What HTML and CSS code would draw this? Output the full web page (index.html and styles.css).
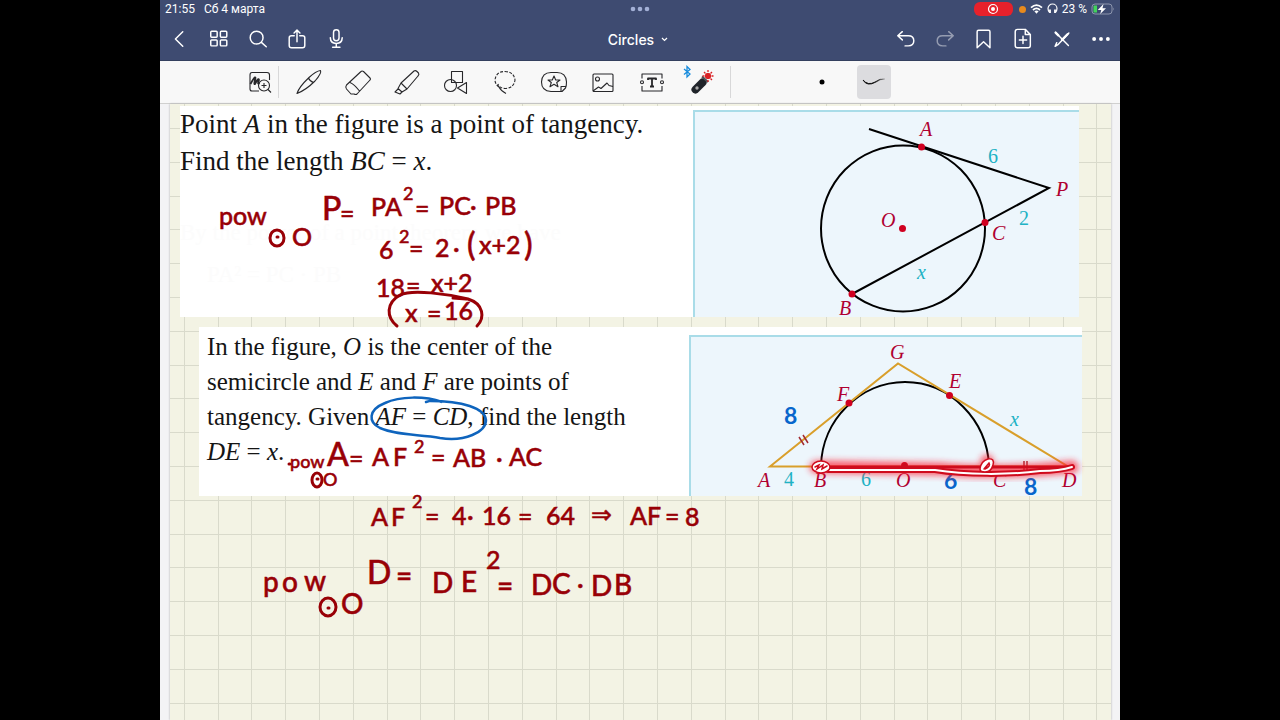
FILE: index.html
```html
<!DOCTYPE html>
<html lang="ru">
<head>
<meta charset="utf-8">
<title>Circles</title>
<link rel="stylesheet" href="styles.css">
</head>
<body>
<div class="app">
  <header class="header">
    <div class="status">
      <div class="status-side"><span>21:55</span><span>Сб 4 марта</span></div>
      <svg class="dots" width="20" height="6" viewBox="0 0 20 6"><circle cx="3" cy="3" r="2.300"/><circle cx="10" cy="3" r="2.300"/><circle cx="17" cy="3" r="2.300"/></svg>
      <div class="status-side status-end">
        <span class="record"><svg width="12" height="12" viewBox="0 0 12 12" fill="none" stroke="#fff"><circle cx="6" cy="6" r="4.500" stroke-width="1.200"/><circle cx="6" cy="6" r="2" fill="#fff" stroke="none"/></svg></span>
        <span class="mic-dot"></span>
        <svg width="13" height="12" viewBox="0 0 13 12" fill="none" stroke="#fff" stroke-width="1.800"><path d="M1 4.600Q6.500 -.4 12 4.600M3 7Q6.500 3.800 10 7"/><path d="M4.400 8.300Q6.500 6.600 8.600 8.300L6.500 10.800Z" fill="#fff" stroke="none"/></svg>
        <svg width="11" height="12" viewBox="0 0 11 12" fill="none" stroke="#fff" stroke-width="1.200"><path d="M2.500 9.500Q1 7.500 1 5.500A4.500 4.500 0 0 1 10 5.500Q10 7.500 8.500 9.500"/><path d="M3 6.500V10M8 6.500V10" stroke-width="1.800"/></svg>
        <span>23 %</span>
        <svg width="24" height="12" viewBox="0 0 24 12"><rect x="1" y="1" width="20" height="10" rx="3" fill="none" stroke="#8c95ad"/><path d="M3 2.500H6V9.500H3Q2.500 9.500 2.500 9V3Q2.500 2.500 3 2.500" fill="#42d35c"/><path d="M22.300 4.500Q24 6 22.300 7.500Z" fill="#8c95ad"/><path d="M12.500 1L6.800 6.900H10.300L9.200 11L15 5.200H11.500Z" fill="#fff"/></svg>
      </div>
    </div>
    <nav class="nav">
      <div class="nav-group">
        <button class="nav-btn" aria-label="Back"><svg class="icon" viewBox="0 0 24 24"><path d="M15 4L7 12L15 20"/></svg></button>
        <button class="nav-btn" aria-label="Thumbnails"><svg class="icon" viewBox="0 0 24 24"><rect x="3" y="3.500" width="7" height="6.500" rx="1"/><rect x="13.500" y="3.500" width="7" height="6.500" rx="1"/><rect x="3" y="13" width="7" height="6.500" rx="1"/><rect x="13.500" y="13" width="7" height="6.500" rx="1"/></svg></button>
        <button class="nav-btn" aria-label="Search"><svg class="icon" viewBox="0 0 24 24"><circle cx="10.500" cy="10.500" r="7"/><path d="M15.700 15.700L21 20.500"/></svg></button>
        <button class="nav-btn" aria-label="Share"><svg class="icon" viewBox="0 0 24 24"><path d="M9 8.500H6Q3.500 8.500 3.500 10.500V19Q3.500 21.500 6 21.500H18Q20.500 21.500 20.500 19V10.500Q20.500 8.500 18 8.500H15M12 15V2.500M8.800 5.500L12 2.300L15.200 5.500"/></svg></button>
        <button class="nav-btn" aria-label="Record"><svg class="icon" viewBox="0 0 24 24"><rect x="9.300" y="2" width="6" height="12" rx="3"/><path d="M5.800 10.500Q6 16.800 12.300 16.800Q18.600 16.800 18.800 10.500M12.300 16.800V21M8.300 21H16.300"/></svg></button>
      </div>
      <button class="title">Circles<svg width="7" height="5" viewBox="0 0 7 5" fill="none" stroke="#fff" stroke-width="1.200"><path d="M1 1L3.500 3.500L6 1"/></svg></button>
      <div class="nav-group nav-end">
        <button class="nav-btn" aria-label="Undo"><svg class="icon" viewBox="0 0 24 24"><path d="M8 4L3 8.500L8 13M3 8.500H14.500Q20.500 8.500 20.500 14Q20.500 19.500 14.500 19.500H11"/></svg></button>
        <button class="nav-btn" aria-label="Redo" disabled><svg class="icon" viewBox="0 0 24 24"><path d="M16 4L21 8.500L16 13M21 8.500H9.500Q3.500 8.500 3.500 14Q3.500 19.500 9.500 19.500H13"/></svg></button>
        <button class="nav-btn" aria-label="Bookmark"><svg class="icon" viewBox="0 0 24 24"><path d="M4.500 4Q4.500 2.500 6 2.500H17Q18.500 2.500 18.500 4V21.500L11.500 15L4.500 21.500Z"/></svg></button>
        <button class="nav-btn" aria-label="Add page"><svg class="icon" viewBox="0 0 24 24"><path d="M14.500 1.500H6Q3.500 1.500 3.500 4V19Q3.500 21.500 6 21.500H17.500Q20 21.500 20 19V7ZM14.500 1.500V7H20M12 9V17M8 13H16"/></svg></button>
        <button class="nav-btn" aria-label="Read only"><svg class="icon" viewBox="0 0 24 24"><path d="M5 5L19 19M4.500 20L8 17.800L19.500 5.500M4.500 20L6.300 16"/><path d="M5 5L8 8M12 13L18 6.800" stroke-width="2.500"/></svg></button>
        <button class="nav-btn" aria-label="More"><svg class="icon" viewBox="0 0 24 24"><g fill="#fff" stroke="none"><circle cx="4.500" cy="12" r="2.100"/><circle cx="12" cy="12" r="2.100"/><circle cx="19.500" cy="12" r="2.100"/></g></svg></button>
      </div>
    </nav>
  </header>

  <div class="toolbar" role="toolbar" aria-label="Tools">
    <button class="tool tool-zoom" aria-label="Zoom window"><svg class="glyph" viewBox="0 0 28 28"><path d="M13 23H6Q4 23 4 21V7Q4 4.500 6 4.500H21Q23.500 4.500 23.500 7V12"/><path d="M4.500 16Q9 7.500 9.500 10Q7.500 17 9 16Q12.500 9 13 12Q11 17 13.500 15" stroke-width="1.800"/><circle cx="18" cy="17.500" r="5.500"/><path d="M22 21.500L25 24.500M15.500 17.500H20.500M18 15V20"/></svg></button>
    <span class="rule"></span>
    <div class="tools">
      <button class="tool" aria-label="Pen"><svg class="glyph" viewBox="0 0 28 28"><path d="M2 25.500Q4 19 14 9.500Q21 3 25.500 2.500Q27 5 20 13Q11 22 2 25.500ZM13.500 10Q14.500 13 18.500 14.500"/></svg></button>
      <button class="tool" aria-label="Eraser"><svg class="glyph" viewBox="0 0 28 28"><path d="M2.500 17L17 3.500Q18 2.500 19.500 3.500L26 10Q27 11 26 12L13 26Q12 27 10 26H7L2.500 21Q1 19 2.500 17ZM6 14.500Q10 16 15.500 23"/></svg></button>
      <button class="tool" aria-label="Highlighter"><svg class="glyph" viewBox="0 0 28 28"><path d="M8 15L21 3Q22.500 2 24 3.500L25.500 5Q26.500 6.500 25 8L14 21ZM8 15L5 20.500L9 24L14 21M5.500 20.500L2 24L7 26L9 24"/></svg></button>
      <button class="tool" aria-label="Shapes"><svg class="glyph" viewBox="0 0 28 28"><rect x="9.500" y="3.500" width="11" height="11"/><circle cx="8.500" cy="17.500" r="6"/><path d="M15.500 20L24.500 14.500V25.500Z"/></svg></button>
      <button class="tool" aria-label="Lasso"><svg class="glyph" viewBox="0 0 28 28"><path d="M8 19Q4 16 4 12Q5 3.500 14 3.500Q23 4 24 12Q23 20 14 20.500Q8 20 7 16" stroke-dasharray="3 1.500"/><path d="M8 19Q10 23 15 25.500"/></svg></button>
      <button class="tool" aria-label="Elements"><svg class="glyph" viewBox="0 0 28 28"><path d="M22 23.500H11Q1.500 23 1.500 14Q2 4.500 11 4.500H17Q26 4.500 26.500 14Q26.500 18 25.500 20ZM26 18.500H21V23.500"/><path d="M14 8L15.700 12H20L16.700 14.500L18 18.700L14 16.300L10 18.700L11.300 14.500L8 12H12.300Z"/></svg></button>
      <button class="tool" aria-label="Image"><svg class="glyph" viewBox="0 0 28 28"><rect x="4" y="6" width="20" height="17.500" rx="1"/><circle cx="8.500" cy="11" r="2"/><path d="M4 23L9.500 19L12 20.500L18 15L20 17.500L24 18.500"/></svg></button>
      <button class="tool" aria-label="Text"><svg class="glyph" viewBox="0 0 28 28"><path d="M4 10.500V6H24V10.500M4 18V23H24V18"/><circle cx="4" cy="14.200" r="1.500"/><circle cx="24" cy="14.200" r="1.500"/><path d="M10 12V10.500H18V12M14 10.500V18.500M12 18.500H16" stroke-width="1.800"/></svg></button>
      <button class="tool" aria-label="Laser pointer"><svg width="36" height="36" viewBox="0 0 36 36"><path d="M1 5L7 10L4 13V2.500L7 5.500L1 10.500" fill="none" stroke="#178bdc" stroke-width="1.300"/><path d="M12.500 25.500L19.500 18.500" stroke="#20242a" stroke-width="8" stroke-linecap="round"/><path d="M19 12.500L25 18" stroke="#4b5056" stroke-width="2"/><circle cx="14" cy="24" r="1.700" fill="#aaa"/><g stroke="#d92024"><circle cx="25" cy="12" r="2.700" fill="#d92024"/><path d="M25 6V8M25 16V18M19.500 12H21.500M28.500 12H30.500M21 8L22.500 9.500M27.500 9.500L29 8M27.500 14.500L29 16" stroke-width="1.300"/></g></svg></button>
    </div>
    <span class="rule"></span>
    <div class="styles">
      <button class="style" aria-label="Dot"><svg width="6" height="6" viewBox="0 0 6 6"><circle cx="3" cy="3" r="2.500"/></svg></button>
      <button class="style style-on" aria-label="Stroke" aria-pressed="true"><svg width="26" height="10" viewBox="0 0 26 10"><defs><linearGradient id="fade"><stop offset=".4" stop-color="#111"/><stop offset="1" stop-color="#111" stop-opacity=".1"/></linearGradient></defs><path d="M2 3Q7 9 14 5Q19 1 24 2Q19 2 15 5Q6 10 2 3Z" fill="url(#fade)" stroke="url(#fade)"/></svg></button>
    </div>
  </div>

  <main class="canvas">
    <div class="paper">
      <svg class="grid" aria-hidden="true"><defs><pattern id="cells" x="149" y="24" width="169" height="169" patternUnits="userSpaceOnUse"><path d="M0 0H1V169H0ZM34 0H35V169H34ZM68 0H69V169H68ZM101 0H102V169H101ZM135 0H136V169H135ZM0 0H169V1H0ZM0 34H169V35H0ZM0 68H169V69H0ZM0 101H169V102H0ZM0 135H169V136H0Z" fill="#d9dacb"/></pattern></defs><rect width="100%" height="100%" fill="url(#cells)"/></svg>

      <article class="problem problem-one">
        <div class="statement">
          <p>Point <i>A</i> in the figure is a point of tangency.<br>Find the length <i>BC</i> = <i>x</i>.</p>
          <p class="erased">By the power of a point theorem we have</p>
          <p class="erased erased-formula">PA² = PC · PB</p>
        </div>
        <svg class="figure" viewBox="695 112 384 205">
          <g class="line"><ellipse cx="903" cy="228.500" rx="82" ry="83"/><path d="M869 129L1049 188L852 294"/></g>
          <g class="point"><circle cx="921.500" cy="147" r="3.500"/><circle cx="985" cy="222.500" r="3.500"/><circle cx="852" cy="294" r="3.500"/><circle cx="902.500" cy="228.500" r="3.500"/></g>
          <g class="label"><text x="920" y="136">A</text><text x="1056" y="196">P</text><text x="881" y="227">O</text><text x="992" y="240">C</text><text x="839" y="315">B</text></g>
          <g class="measure"><text x="988" y="163">6</text><text x="1019" y="225">2</text><text x="917" y="279" class="var">x</text></g>
        </svg>
      </article>

      <article class="problem problem-two">
        <p class="statement">In the figure, <i>O</i> is the center of the<br>semicircle and <i>E</i> and <i>F</i> are points of<br>tangency. Given <i>AF</i> = <i>CD</i>, find the length<br><i>DE</i> = <i>x</i>.</p>
        <svg class="figure" viewBox="691 337 391 159">
          <path class="line" d="M821 466C822 420 860 382 905 382C950 382 987 420 989 466"/>
          <path class="gold" d="M770 466.500L898 363.500L1068 466.500Z"/>
          <path class="tick" d="M799 437L804 445M803 435L808 443M1024 461V471M1027 461V471"/>
          <g class="point"><circle cx="849" cy="403" r="3.500"/><circle cx="949.500" cy="395.500" r="3.500"/><circle cx="904.500" cy="465.500" r="3.500"/></g>
          <g class="label"><text x="890" y="359">G</text><text x="837" y="401">F</text><text x="949" y="388">E</text><text x="758" y="487">A</text><text x="814" y="487">B</text><text x="896" y="487">O</text><text x="993" y="487">C</text><text x="1062" y="487">D</text></g>
          <g class="measure"><text x="784" y="486">4</text><text x="861" y="486">6</text><text x="1010" y="426" class="var">x</text></g>
        </svg>
      </article>

      <svg class="ink" viewBox="170 104 941 616">
        <defs><filter id="glow" x="-10%" y="-100%" width="120%" height="300%"><feGaussianBlur stdDeviation="3"/></filter></defs>
        <g class="red">
          <g class="m"><text x="219" y="225">pow</text><text x="292" y="246">O</text></g>
          <text class="l" x="322" y="220">P</text>
          <g class="m"><text x="340" y="222">=</text><text x="371" y="216">PA</text><text x="415" y="217">=</text><text x="439" y="215">PC</text><text x="470" y="215">·</text><text x="485" y="215">PB</text>
          <text x="379" y="259">6</text><text x="409" y="257">=</text><text x="435" y="257">2</text><text x="453" y="257">·</text><text x="479" y="254">x+2</text>
          <text x="376" y="297">18</text><text x="406" y="294">=</text><text x="431" y="292">x+2</text>
          <text x="405" y="322">x</text><text x="427" y="322">=</text><text x="444" y="320">16</text></g>
          <g class="s"><text x="403" y="200">2</text><text x="399" y="243">2</text><text x="414" y="453">2</text><text x="412" y="508">2</text></g>
          <g class="xl"><text x="467" y="256">(</text><text x="524" y="256">)</text></g>

          <g class="s"><text x="290" y="468">pow</text><text x="323" y="486">O</text></g>
          <text class="l" x="327" y="466">A</text>
          <g class="m"><text x="349" y="467">=</text><text x="372" y="466">A</text><text x="393" y="466">F</text><text x="431" y="466">=</text><text x="453" y="467">AB</text><text x="496" y="467">·</text><text x="509" y="466">AC</text>
          <text x="371" y="526">A</text><text x="391" y="526">F</text><text x="425" y="525">=</text><text x="452" y="525">4</text><text x="467" y="525">·</text><text x="482" y="525">16</text><text x="518" y="525">=</text><text x="546" y="525">64</text><text x="591" y="523">⇒</text><text x="630" y="525">AF</text><text x="665" y="525">=</text><text x="685" y="526">8</text>
          <text x="486" y="569">2</text><text x="577" y="593">·</text></g>
          <g class="ml"><text x="263" y="592">p</text><text x="282" y="592">o</text><text x="304" y="591">w</text><text x="341" y="614">O</text><text x="396" y="586">=</text><text x="432" y="593">D</text><text x="461" y="592">E</text><text x="497" y="596">=</text><text x="531" y="595">D</text><text x="552" y="594">C</text><text x="591" y="596">D</text><text x="614" y="595">B</text></g>
          <text class="l" x="367" y="584">D</text>
          <g class="stroke"><ellipse cx="277" cy="238" rx="7" ry="8"/><path d="M277 237H278"/><ellipse cx="317" cy="480" rx="5" ry="7"/><path d="M317 479H318"/><ellipse cx="328" cy="607" rx="8" ry="9"/><path d="M328 608H329M289 464H290"/>
          <path d="M397 326C386 317 386 303 400 295C412 289 448 294 468 299C484 304 485 318 477 326M453 298L466 299"/></g>
        </g>
        <path class="loop" d="M426 402Q434 399 442 402C425 396 400 396 385 403C368 410 368 422 380 428C398 436 420 434 440 438C465 442 486 432 486 420C485 408 462 401 430 401"/>
        <g class="blue"><text x="784" y="424">8</text><text x="944" y="489">6</text><text x="1024" y="495">8</text></g>
        <g class="laser">
          <path class="halo" filter="url(#glow)" d="M816 467H826L940 469C980 473 1030 471 1072 467M987 461V468"/>
          <path class="base" d="M828 467L1068 467"/>
          <path class="beam" d="M828 470L935 470C965 475 1010 475 1040 471Q1060 471 1072 467"/>
          <path class="core" d="M828 470L935 470C965 475 1010 475 1040 471Q1060 471 1072 467"/>
          <ellipse cx="821" cy="467" rx="9" ry="6"/><path d="M815 467L819 465L817 469L823 465L822 469L827 466"/>
          <path class="blob" d="M980 469Q981 461 988 459Q995 458 993 465Q991 472 985 472Q980 472 980 469ZM984 469L989 463Q991 466 985 469"/>
          <circle class="center" cx="904.500" cy="465.500" r="3"/>
        </g>
      </svg>
    </div>
  </main>
</div>
</body>
</html>
```

FILE: styles.css
```css
* { box-sizing: border-box; }
body { margin: 0; background: #000; font-family: Inter, "Noto Sans", sans-serif; }
button { margin: 0; padding: 0; border: 0; background: none; color: inherit; font: inherit; }
.app { display: flex; flex-direction: column; height: 100vh; aspect-ratio: 4 / 3; max-width: 100%; margin: 0 auto; background: #f3f3f5; overflow: hidden; }

.header { flex: none; background: #3e4b71; color: #fff; border-bottom: 1px solid #34405f; }
.status { display: grid; grid-template-columns: 1fr auto 1fr; align-items: center; height: 18px; padding: 0 5px; font-family: Roboto, sans-serif; font-size: 12px; }
.status-side { display: flex; align-items: center; gap: 9px; }
.status-end { justify-content: flex-end; gap: 4px; }
.dots { fill: #a3b0d6; }
.record { display: flex; align-items: center; justify-content: center; width: 39px; height: 14px; margin-right: 2px; border-radius: 6px; background: #e7212b; }
.mic-dot { width: 7px; height: 7px; border-radius: 50%; background: #e88a1d; }
.nav { display: grid; grid-template-columns: 1fr auto 1fr; align-items: center; height: 42px; }
.nav-group { display: flex; }
.nav-end { justify-content: flex-end; }
.nav-btn { display: flex; align-items: center; justify-content: center; width: 39px; height: 42px; }
.nav-btn:disabled { opacity: .45; }
.icon { width: 22px; height: 22px; fill: none; stroke: #fff; stroke-width: 1.6; stroke-linecap: round; stroke-linejoin: round; }
.title { display: flex; align-items: center; gap: 7px; padding-right: 4px; font-size: 14px; font-weight: 500; }

.toolbar { flex: none; display: flex; align-items: center; height: 43px; padding-left: 82px; background: #f8f8f8; border-bottom: 1px solid #d0d0cf; }
.tools { display: flex; margin: 0 5px; }
.tool { display: flex; align-items: center; justify-content: center; width: 49px; height: 42px; }
.tool-zoom { width: 36px; }
.glyph { width: 28px; height: 28px; fill: none; stroke: #27272a; stroke-width: 1.1; stroke-linejoin: round; }
.rule { width: 1px; height: 32px; background: #d8d8d9; }
.styles { display: flex; gap: 18px; margin-left: 74px; }
.style { display: flex; align-items: center; justify-content: center; width: 34px; height: 34px; border-radius: 4px; }
.style-on { background: #dcdcdf; }

.canvas { flex: 1; min-height: 0; padding: 0 9px 0 10px; }
.paper { position: relative; height: 100%; padding: 2px 29px 0 10px; background: #f3f3e4; box-shadow: 0 0 2px #aaa; }
.grid { position: absolute; inset: 0; width: 100%; height: 100%; }
.problem { position: relative; display: flex; background: #fff; font-family: "Liberation Serif", serif; color: #151515; }
.statement { flex: 1; margin: 0; white-space: nowrap; }
.problem-one { margin-right: 3px; padding-top: 4px; font-size: 27px; line-height: 37px; }
.problem-one .statement { margin-top: -4px; }
.problem-one p { margin: 0; }
.problem-two { margin: 10px 0 0 19px; padding-top: 8px; font-size: 25px; line-height: 35px; }
.problem-two .statement { padding: 0 0 0 8px; margin-top: -6px; }
.problem-one .erased { margin-top: 36px; font-size: 23px; line-height: 34px; color: #fcfcfc; }
.problem-one .erased-formula { margin-top: 8px; padding-left: 27px; }
.figure { flex: none; border: 2px solid #a9dce8; border-width: 2px 0 0 2px; background: #edf6fc; }
.problem-one .figure { width: 386px; height: 207px; }
.problem-two .figure { width: 393px; height: 161px; }

.line { fill: none; stroke: #000; stroke-width: 2; }
.gold { fill: none; stroke: #d99f2b; stroke-width: 2; }
.tick { stroke: #a32b31; stroke-width: 1.5; }
.point { fill: #d00020; }
.label { fill: #b00030; font: italic 20px "Liberation Serif", serif; }
.measure { fill: #20b2c4; font: 20px "Liberation Serif", serif; }
.var { font-style: italic; }

.ink { position: absolute; top: 0; left: 0; width: 941px; height: 616px; pointer-events: none; }
.red { fill: #980006; font-family: Lato, "DejaVu Sans", sans-serif; font-weight: 500; }
.red text { stroke: #980006; stroke-width: 0.5; }
.s { font-size: 18px; }
.m { font-size: 25px; }
.ml { font-size: 28px; }
.l { font-size: 32px; }
.xl { font-size: 32px; }
.stroke { fill: none; stroke: #980006; stroke-width: 3; stroke-linecap: round; }
.loop { fill: none; stroke: #0e64bd; stroke-width: 2.5; stroke-linecap: round; }
.blue { fill: #0866cc; font: bold 23px Lato, sans-serif; }
.laser { fill: #fff; stroke: #cf0b1d; stroke-width: 1.5; stroke-linecap: round; }
.halo { fill: none; stroke: #ff2035; stroke-width: 13; opacity: .7; }
.base { fill: none; stroke-width: 3; }
.beam { fill: none; stroke-width: 6; }
.core { fill: none; stroke: #fff; stroke-width: 2; }
.center { fill: #cf0b1d; stroke: none; }
```
